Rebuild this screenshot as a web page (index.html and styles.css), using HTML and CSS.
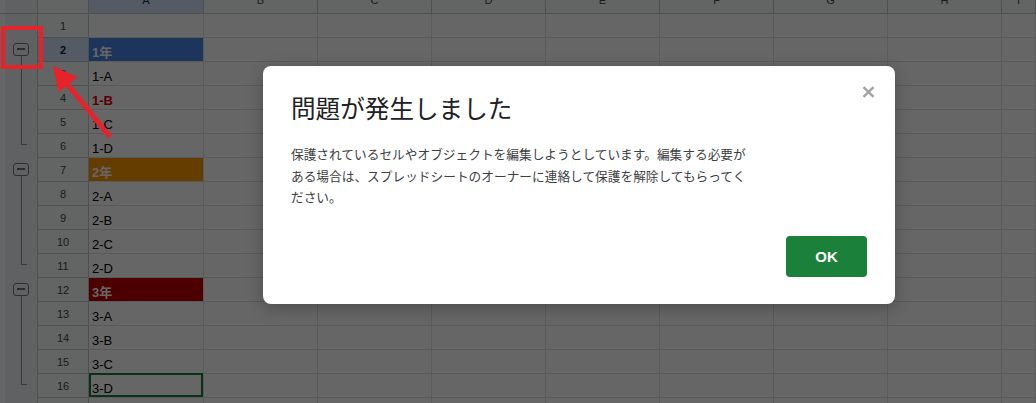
FILE: index.html
```html
<!DOCTYPE html>
<html lang="ja">
<head>
<meta charset="utf-8">
<title>問題が発生しました</title>
<link rel="stylesheet" href="styles.css">
</head>
<body>
<div class="sheet">
  <div class="row">
    <div class="g gh"></div><div class="corner"></div>
    <div class="ch sel"><span>A</span></div><div class="ch"><span>B</span></div><div class="ch"><span>C</span></div><div class="ch"><span>D</span></div><div class="ch"><span>E</span></div><div class="ch"><span>F</span></div><div class="ch"><span>G</span></div><div class="ch"><span>H</span></div><div class="ch"><span>I</span></div>
  </div>
  <div class="row">
    <div class="g"></div><div class="rh">1</div>
    <div class="c"></div><div class="c"></div><div class="c"></div><div class="c"></div><div class="c"></div><div class="c"></div><div class="c"></div><div class="c"></div><div class="c"></div>
  </div>
  <div class="row">
    <div class="g g-start"><span class="gbox"></span></div><div class="rh sel">2</div>
    <div class="c year y1">1年</div><div class="c"></div><div class="c"></div><div class="c"></div><div class="c"></div><div class="c"></div><div class="c"></div><div class="c"></div><div class="c"></div>
  </div>
  <div class="row">
    <div class="g g-mid"></div><div class="rh">3</div>
    <div class="c">1-A</div><div class="c"></div><div class="c"></div><div class="c"></div><div class="c"></div><div class="c"></div><div class="c"></div><div class="c"></div><div class="c"></div>
  </div>
  <div class="row">
    <div class="g g-mid"></div><div class="rh">4</div>
    <div class="c red">1-B</div><div class="c"></div><div class="c"></div><div class="c"></div><div class="c"></div><div class="c"></div><div class="c"></div><div class="c"></div><div class="c"></div>
  </div>
  <div class="row">
    <div class="g g-mid"></div><div class="rh">5</div>
    <div class="c">1-C</div><div class="c"></div><div class="c"></div><div class="c"></div><div class="c"></div><div class="c"></div><div class="c"></div><div class="c"></div><div class="c"></div>
  </div>
  <div class="row">
    <div class="g g-end"></div><div class="rh">6</div>
    <div class="c">1-D</div><div class="c"></div><div class="c"></div><div class="c"></div><div class="c"></div><div class="c"></div><div class="c"></div><div class="c"></div><div class="c"></div>
  </div>
  <div class="row">
    <div class="g g-start"><span class="gbox"></span></div><div class="rh">7</div>
    <div class="c year y2">2年</div><div class="c"></div><div class="c"></div><div class="c"></div><div class="c"></div><div class="c"></div><div class="c"></div><div class="c"></div><div class="c"></div>
  </div>
  <div class="row">
    <div class="g g-mid"></div><div class="rh">8</div>
    <div class="c">2-A</div><div class="c"></div><div class="c"></div><div class="c"></div><div class="c"></div><div class="c"></div><div class="c"></div><div class="c"></div><div class="c"></div>
  </div>
  <div class="row">
    <div class="g g-mid"></div><div class="rh">9</div>
    <div class="c">2-B</div><div class="c"></div><div class="c"></div><div class="c"></div><div class="c"></div><div class="c"></div><div class="c"></div><div class="c"></div><div class="c"></div>
  </div>
  <div class="row">
    <div class="g g-mid"></div><div class="rh">10</div>
    <div class="c">2-C</div><div class="c"></div><div class="c"></div><div class="c"></div><div class="c"></div><div class="c"></div><div class="c"></div><div class="c"></div><div class="c"></div>
  </div>
  <div class="row">
    <div class="g g-end"></div><div class="rh">11</div>
    <div class="c">2-D</div><div class="c"></div><div class="c"></div><div class="c"></div><div class="c"></div><div class="c"></div><div class="c"></div><div class="c"></div><div class="c"></div>
  </div>
  <div class="row">
    <div class="g g-start"><span class="gbox"></span></div><div class="rh">12</div>
    <div class="c year y3">3年</div><div class="c"></div><div class="c"></div><div class="c"></div><div class="c"></div><div class="c"></div><div class="c"></div><div class="c"></div><div class="c"></div>
  </div>
  <div class="row">
    <div class="g g-mid"></div><div class="rh">13</div>
    <div class="c">3-A</div><div class="c"></div><div class="c"></div><div class="c"></div><div class="c"></div><div class="c"></div><div class="c"></div><div class="c"></div><div class="c"></div>
  </div>
  <div class="row">
    <div class="g g-mid"></div><div class="rh">14</div>
    <div class="c">3-B</div><div class="c"></div><div class="c"></div><div class="c"></div><div class="c"></div><div class="c"></div><div class="c"></div><div class="c"></div><div class="c"></div>
  </div>
  <div class="row">
    <div class="g g-mid"></div><div class="rh">15</div>
    <div class="c">3-C</div><div class="c"></div><div class="c"></div><div class="c"></div><div class="c"></div><div class="c"></div><div class="c"></div><div class="c"></div><div class="c"></div>
  </div>
  <div class="row">
    <div class="g g-end"></div><div class="rh">16</div>
    <div class="c active">3-D</div><div class="c"></div><div class="c"></div><div class="c"></div><div class="c"></div><div class="c"></div><div class="c"></div><div class="c"></div><div class="c"></div>
  </div>
  <div class="row">
    <div class="g"></div><div class="rh"></div>
    <div class="c"></div><div class="c"></div><div class="c"></div><div class="c"></div><div class="c"></div><div class="c"></div><div class="c"></div><div class="c"></div><div class="c"></div>
  </div>
</div>

<div class="backdrop"></div>

<div class="dialog" role="dialog">
  <div class="dlg-head">
    <h1 class="dlg-title">問題が発生しました</h1>
    <button class="dlg-close" aria-label="閉じる">
      <svg width="13" height="12" viewBox="0 0 13 12"><path d="M1.5 1.2 L11.5 10.8 M11.5 1.2 L1.5 10.8" stroke="#a3a3a3" stroke-width="2.4" stroke-linecap="butt" fill="none"/></svg>
    </button>
  </div>
  <p class="dlg-body">保護されているセルやオブジェクトを編集しようとしています。編集する必要がある場合は、スプレッドシートのオーナーに連絡して保護を解除してもらってください。</p>
  <button class="dlg-ok">OK</button>
</div>

<svg class="annot" width="1036" height="403" viewBox="0 0 1036 403">
  <rect x="3" y="28" width="38" height="39" fill="none" stroke="#e8222a" stroke-width="4"/>
  <line x1="110" y1="137" x2="68" y2="85" stroke="#e8222a" stroke-width="5"/>
  <polygon points="53,66 58.6,92.2 77.4,77.2" fill="#e8222a"/>
</svg>
</body>
</html>
```
FILE: styles.css
```css
html, body {
  margin: 0;
  padding: 0;
}
body {
  width: 1036px;
  height: 403px;
  overflow: hidden;
  position: relative;
  background: #fff;
  font-family: "Liberation Sans", Arial, "Noto Sans CJK JP", sans-serif;
}

/* ---------- spreadsheet ---------- */
.sheet {
  display: grid;
  grid-template-columns: 38px 51px 115px repeat(7, 114px) 1fr;
  grid-template-rows: 14px repeat(17, 24px);
}
.row { display: contents; }

.g {
  position: relative;
  box-sizing: border-box;
  background: linear-gradient(to right, #ffffff 0 5px, #f1f3f4 5px);
  border-right: 1px solid #c4c7c5;
}
.g.gh { border-bottom: 1px solid #c4c7c5; }

.corner {
  box-sizing: border-box;
  background: #f8f9fa;
  border-right: 1px solid #c4c7c5;
  border-bottom: 1px solid #c4c7c5;
}

.ch {
  box-sizing: border-box;
  background: #f8f9fa;
  border-right: 1px solid #c4c7c5;
  border-bottom: 1px solid #c4c7c5;
  overflow: hidden;
  text-align: center;
  font-size: 11px;
  line-height: 11px;
  color: #444746;
}
.ch span {
  display: block;
  margin-top: -5px;
}
.ch.sel { background: #d3e3fd; color: #0b2a5a; }

.rh {
  box-sizing: border-box;
  background: #f8f9fa;
  border-right: 1px solid #c4c7c5;
  border-bottom: 1px solid #c4c7c5;
  display: flex;
  align-items: center;
  justify-content: center;
  font-size: 11px;
  color: #444746;
}
.rh.sel {
  background: #d3e3fd;
  font-weight: bold;
  color: #0b1f40;
}

.c {
  position: relative;
  box-sizing: border-box;
  border-right: 1px solid #e1e1e1;
  border-bottom: 1px solid #e1e1e1;
  display: flex;
  align-items: flex-end;
  padding: 0 3px;
  font-size: 13px;
  line-height: 16px;
  color: #000;
  white-space: nowrap;
}
.c.year {
  font-weight: bold;
  color: #fff;
  font-family: "Liberation Sans", "Noto Sans CJK JP", sans-serif;
}
.c.y1 { background: #4a86e8; }
.c.y2 { background: #ff9900; }
.c.y3 { background: #c00000; }
.c.red { color: #e00000; font-weight: bold; }
.c.active::after {
  content: "";
  position: absolute;
  top: -1px;
  left: 0;
  right: 0;
  bottom: 0;
  border: 2px solid #188038;
}

/* row group controls */
.g-start {
  padding: 5px 0 0 13px;
}
.gbox {
  position: relative;
  display: block;
  box-sizing: border-box;
  width: 16px;
  height: 13px;
  border: 1.5px solid #6f7479;
  border-radius: 3px;
}
.gbox::before {
  content: "";
  position: absolute;
  left: 3px;
  right: 3px;
  top: 4px;
  height: 1.5px;
  background: #6f7479;
}
.g-start::after {
  content: "";
  position: absolute;
  left: 21px;
  top: 18px;
  bottom: 0;
  width: 1px;
  background: #8a8f94;
}
.g-mid::after {
  content: "";
  position: absolute;
  left: 21px;
  top: 0;
  bottom: 0;
  width: 1px;
  background: #8a8f94;
}
.g-end::after {
  content: "";
  position: absolute;
  left: 21px;
  top: 0;
  width: 6px;
  height: 11px;
  box-sizing: border-box;
  border-left: 1px solid #8a8f94;
  border-bottom: 1px solid #8a8f94;
}

/* ---------- modal ---------- */
.backdrop {
  position: absolute;
  inset: 0;
  background: rgba(0, 0, 0, 0.6);
}

.dialog {
  position: absolute;
  left: 263px;
  top: 66px;
  width: 632px;
  height: 238px;
  box-sizing: border-box;
  padding: 26px 28px 27px 28px;
  background: #fff;
  border-radius: 8px;
  box-shadow: 0 4px 16px rgba(0, 0, 0, 0.25);
  display: flex;
  flex-direction: column;
  font-family: "Noto Sans CJK JP", "Liberation Sans", sans-serif;
}
.dlg-head {
  display: flex;
  justify-content: space-between;
  align-items: flex-start;
  margin-right: -8px;
}
.dlg-title {
  margin: 0;
  font-size: 24.6px;
  line-height: 30px;
  font-weight: 400;
  color: #202124;
}
.dlg-close {
  margin-top: -6px;
  padding: 0;
  border: 0;
  background: none;
  width: 13px;
  height: 12px;
  display: block;
}
.dlg-close svg { display: block; }

.dlg-body {
  margin: 21px 0 0 0;
  width: 464px;
  font-size: 12.7px;
  line-height: 21.5px;
  color: #3c4043;
}

.dlg-ok {
  margin-top: auto;
  align-self: flex-end;
  width: 81px;
  height: 41px;
  border: 0;
  border-radius: 4px;
  background: #1b803a;
  color: #fff;
  font-family: "Liberation Sans", Arial, sans-serif;
  font-weight: bold;
  font-size: 15px;
  padding: 0;
}

/* ---------- annotation ---------- */
.annot {
  position: absolute;
  left: 0;
  top: 0;
  pointer-events: none;
}
```
